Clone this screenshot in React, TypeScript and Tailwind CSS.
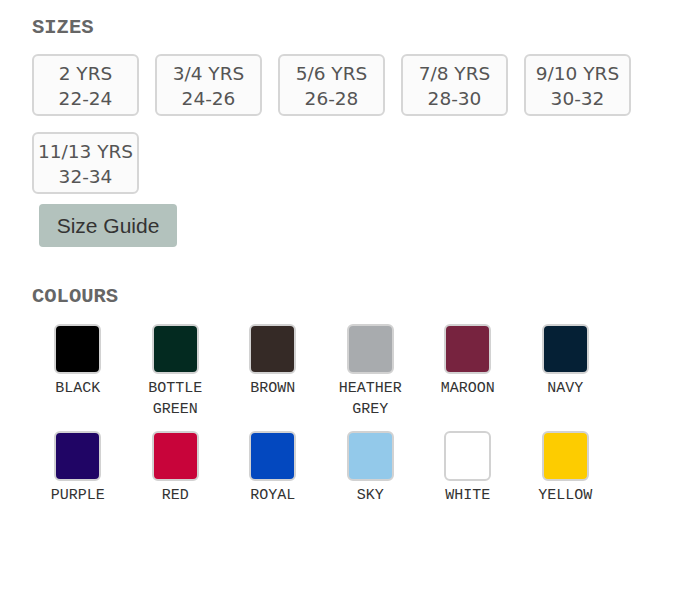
const sizes = [
  ["2 YRS", "22-24"],
  ["3/4 YRS", "24-26"],
  ["5/6 YRS", "26-28"],
  ["7/8 YRS", "28-30"],
  ["9/10 YRS", "30-32"],
  ["11/13 YRS", "32-34"],
];

const colours: { name: string; hex: string }[] = [
  { name: "BLACK", hex: "#000000" },
  { name: "BOTTLE GREEN", hex: "#032a20" },
  { name: "BROWN", hex: "#352a26" },
  { name: "HEATHER GREY", hex: "#a8abae" },
  { name: "MAROON", hex: "#77233f" },
  { name: "NAVY", hex: "#052035" },
  { name: "PURPLE", hex: "#200565" },
  { name: "RED", hex: "#c8043a" },
  { name: "ROYAL", hex: "#0348bf" },
  { name: "SKY", hex: "#93c9ea" },
  { name: "WHITE", hex: "#ffffff" },
  { name: "YELLOW", hex: "#fdcc00" },
];

export default function App() {
  return (
    <div className="w-[694px] h-[591px] bg-white pl-8 pt-[14px]">
      <h2 className="font-['Liberation_Mono',monospace] font-bold text-[20.5px] leading-[28px] text-[#666]">
        SIZES
      </h2>

      <div className="mt-[12px] flex flex-wrap gap-4">
        {sizes.map(([yrs, cm]) => (
          <button
            key={yrs}
            className="w-[107px] h-[62px] rounded-md border-2 border-[#d6d6d6] bg-[#fbfbfb] pt-[5px] font-['DejaVu_Sans',sans-serif] text-[18.5px] leading-[25px] text-[#555] flex flex-col items-center"
          >
            <span>{yrs}</span>
            <span>{cm}</span>
          </button>
        ))}
      </div>

      <button className="mt-[10px] ml-[7px] w-[138px] h-[43px] rounded-sm bg-[#b3c2bd] font-['Liberation_Sans',sans-serif] text-[21px] text-[#333]">
        Size Guide
      </button>

      <h2 className="mt-[36px] font-['Liberation_Mono',monospace] font-bold text-[20.5px] leading-[28px] text-[#666]">
        COLOURS
      </h2>

      <div className="mt-[13px] -ml-[3px] grid grid-cols-[repeat(6,97.5px)] gap-y-[11px]">
        {colours.map((c) => (
          <div key={c.name} className="flex flex-col items-center">
            <div
              className="w-[47px] h-[50px] rounded-md border-2 border-[#d2d2d2]"
              style={{ backgroundColor: c.hex }}
            />
            <div className="mt-[4px] w-[84px] text-center font-['Liberation_Mono',monospace] text-[15px] leading-[21px] text-[#333]">
              {c.name}
            </div>
          </div>
        ))}
      </div>
    </div>
  );
}
